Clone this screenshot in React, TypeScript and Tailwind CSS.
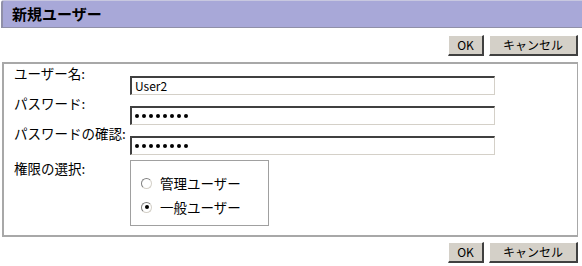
import React from "react";

const font = { fontFamily: '"Noto Sans CJK JP", "Liberation Sans", sans-serif' };

function Btn({ label, w }: { label: string; w: string }) {
  return (
    <button
      className={`${w} h-[21px] bg-[#d4d0c8] text-[12px] text-black border-t border-l border-t-white border-l-white border-r-2 border-b-2 border-r-[#404040] border-b-[#404040] flex items-center justify-center leading-none`}
    >
      {label}
    </button>
  );
}

function Field({ children }: { children: React.ReactNode }) {
  return (
    <div className="mt-[11px] w-[365px] h-[19px] bg-white border-t-2 border-l-2 border-t-[#404040] border-l-[#404040] border-r border-b border-r-[#d4d0c8] border-b-[#d4d0c8] flex items-center px-[3px] text-[12px] leading-none">
      {children}
    </div>
  );
}

function Dots() {
  return (
    <div className="flex gap-[3px]">
      {Array.from({ length: 8 }).map((_, i) => (
        <span key={i} className="w-[4px] h-[4px] rounded-full bg-black" />
      ))}
    </div>
  );
}

function Radio({ checked, label }: { checked: boolean; label: string }) {
  return (
    <div className="flex items-center gap-[8px] h-[24px]">
      <span className="w-[11px] h-[11px] rounded-full border border-t-[#808080] border-l-[#808080] border-r-[#d4d0c8] border-b-[#d4d0c8] bg-white flex items-center justify-center">
        {checked && <span className="w-[4px] h-[4px] rounded-full bg-black" />}
      </span>
      <span className="text-[13.5px]">{label}</span>
    </div>
  );
}

export default function App() {
  return (
    <div className="w-[582px] h-[266px] bg-white text-black" style={font}>
      <div className="ml-[1px] h-[28px] bg-[#a8a8d8] border-t border-l-2 border-b border-t-[#c8c8e0] border-l-[#9090a8] border-b-[#9090a8] rounded-tl-[3px] flex items-center pl-[9px]">
        <span className="text-[15px] font-bold">新規ユーザー</span>
      </div>
      <div className="flex justify-end gap-[5px] pr-[4px] mt-[7px]">
        <Btn label="OK" w="w-[36px]" />
        <Btn label="キャンセル" w="w-[89px]" />
      </div>
      <div className="mx-[2px] mr-[4px] mt-[6px] h-[175px] border-2 border-[#a8a8a8] border-r border-b-2 pt-[1px] pl-[10px]">
        <div className="flex flex-col text-[13.5px]">
          <div className="flex items-start h-[30px]">
            <span className="w-[116px] leading-[16px]">ユーザー名:</span>
            <Field>User2</Field>
          </div>
          <div className="flex items-start h-[30px]">
            <span className="w-[116px] leading-[16px]">パスワード:</span>
            <Field>
              <Dots />
            </Field>
          </div>
          <div className="flex items-start h-[29px]">
            <span className="w-[116px] leading-[16px]">パスワードの確認:</span>
            <Field>
              <Dots />
            </Field>
          </div>
          <div className="flex items-start mt-[6px]">
            <span className="w-[116px] leading-[16px]">権限の選択:</span>
            <div className="w-[139px] h-[66px] border border-[#a0a0a0] pl-[10px] pt-[10px]">
              <Radio checked={false} label="管理ユーザー" />
              <Radio checked={true} label="一般ユーザー" />
            </div>
          </div>
        </div>
      </div>
      <div className="flex justify-end gap-[5px] pr-[4px] mt-[5px]">
        <Btn label="OK" w="w-[36px]" />
        <Btn label="キャンセル" w="w-[89px]" />
      </div>
    </div>
  );
}
